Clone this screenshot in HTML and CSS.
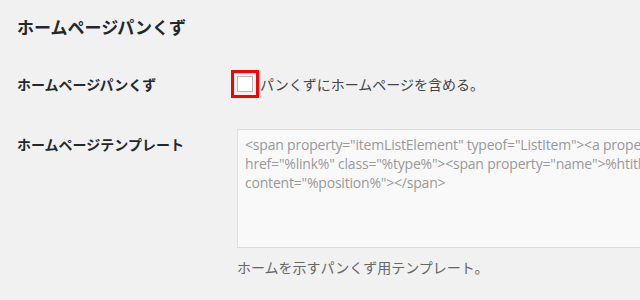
FILE: index.html
```html
<!DOCTYPE html>
<html lang="ja">
<head>
    <meta charset="UTF-8">
    <meta name="viewport" content="width=device-width, initial-scale=1.0">
    <title>ホームページパンくず</title>
    <link rel="stylesheet" href="styles.css">
</head>
<body>
    <div class="wrap">
        <h2 class="section-title">ホームページパンくず</h2>

        <!-- include home in breadcrumb -->
        <div class="form-row row-check">
            <div class="row-label">ホームページパンくず</div>
            <div class="row-field">
                <label class="check-label">
                    <span class="check-mark"><input type="checkbox" class="check-input"></span>
                    パンくずにホームページを含める。
                </label>
            </div>
        </div>

        <!-- home template -->
        <div class="form-row row-template">
            <div class="row-label label-top">ホームページテンプレート</div>
            <div class="row-field">
                <div class="template-box">
                    <div class="template-line">&lt;span property="itemListElement" typeof="ListItem"&gt;&lt;a property="item" typeof="WebPage" title="Go to %title%."</div>
                    <div class="template-line">href="%link%" class="%type%"&gt;&lt;span property="name"&gt;%htitle%&lt;/span&gt;&lt;/a&gt;&lt;meta property="position"</div>
                    <div class="template-line">content="%position%"&gt;&lt;/span&gt;</div>
                </div>
                <p class="description">ホームを示すパンくず用テンプレート。</p>
            </div>
        </div>
    </div>
</body>
</html>
```

FILE: styles.css
```css
html, body {
    margin: 0;
    padding: 0;
    background-color: #f1f1f1;
    overflow: hidden;
}
body {
    font-family: "Noto Sans CJK JP", "Noto Sans", sans-serif;
    color: #444;
    font-size: 14px;
}
.wrap {
    padding-left: 17px;
    width: 900px;
}
.section-title {
    margin: 0;
    padding-top: 15px;
    font-size: 17px;
    line-height: 24px;
    font-weight: bold;
    color: #23282d;
}
.form-row {
    display: flex;
    align-items: center;
}
.row-check {
    margin-top: 35px;
}
.row-template {
    margin-top: 35px;
    align-items: flex-start;
}
.row-label {
    width: 220px;
    flex-shrink: 0;
    font-weight: bold;
    font-size: 14px;
    line-height: 20px;
    color: #23282d;
}
.label-top {
    padding-top: 5px;
}
.check-label {
    display: flex;
    align-items: center;
    font-size: 14px;
    line-height: 20px;
    color: #444;
}
.check-mark {
    display: inline-block;
    width: 16px;
    height: 16px;
    margin-right: 7px;
    outline: 3px solid #ff0000;
    outline-offset: 3px;
}
.check-input {
    appearance: none;
    -webkit-appearance: none;
    display: block;
    margin: 0;
    width: 16px;
    height: 16px;
    box-sizing: border-box;
    border: 1px solid #b4b9be;
    background-color: #fff;
}
.template-box {
    width: 560px;
    height: 119px;
    box-sizing: border-box;
    padding: 5px 7px;
    border: 1px solid #dddddd;
    background-color: #f9f9f9;
    color: #999;
    font-family: "Open Sans", "Noto Sans", sans-serif;
    font-size: 14px;
    letter-spacing: -0.2px;
    line-height: 19px;
}
.template-line {
    white-space: nowrap;
}
.description {
    margin: 9px 0 0;
    font-size: 14px;
    line-height: 20px;
    color: #666;
}
```
